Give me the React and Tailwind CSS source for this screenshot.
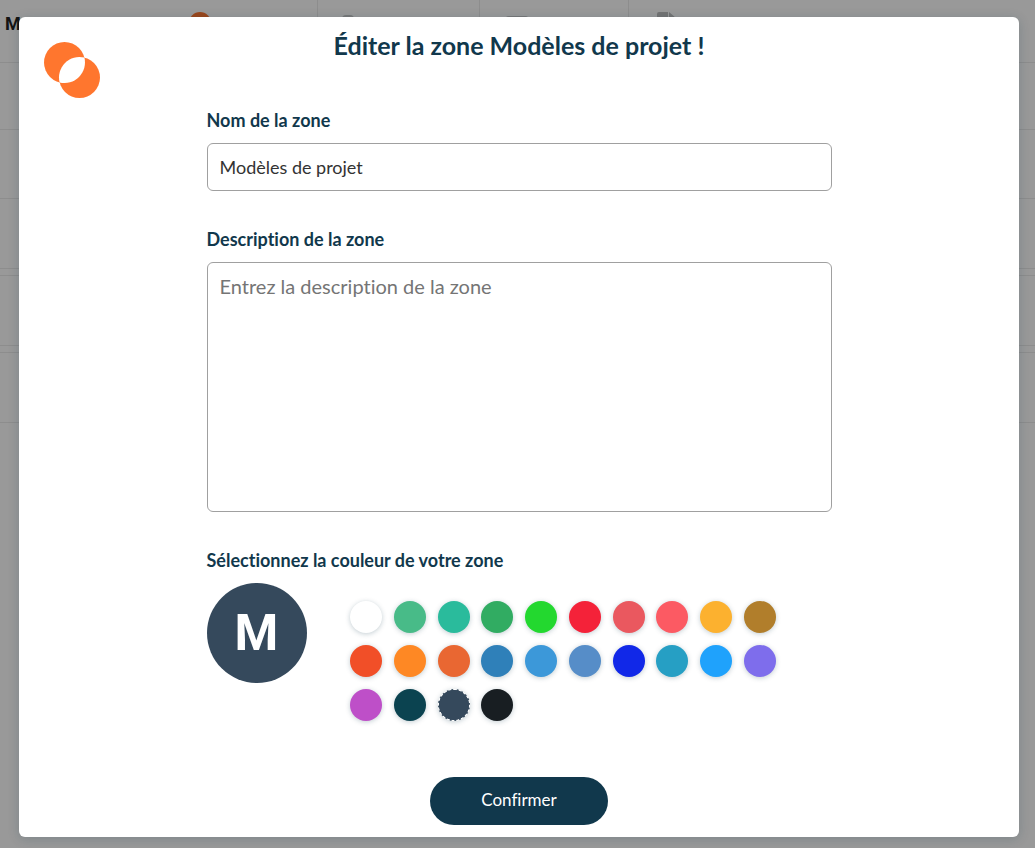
import { useState } from 'react';

const COLORS = [
  { name: 'Blanc', value: '#ffffff' },
  { name: 'Vert menthe', value: '#48bb88' },
  { name: 'Turquoise', value: '#2abb9c' },
  { name: 'Vert', value: '#31ac62' },
  { name: 'Vert vif', value: '#23d82f' },
  { name: 'Rouge', value: '#f42239' },
  { name: 'Rouge doux', value: '#ea585f' },
  { name: 'Corail', value: '#fc5a63' },
  { name: 'Jaune', value: '#fcb12f' },
  { name: 'Bronze', value: '#b17e2b' },
  { name: 'Vermillon', value: '#f14f28' },
  { name: 'Orange', value: '#fe8824' },
  { name: 'Terre cuite', value: '#e96732' },
  { name: 'Bleu', value: '#2f80b9' },
  { name: 'Bleu ciel', value: '#3c98d9' },
  { name: 'Bleu gris', value: '#568dc8' },
  { name: 'Bleu roi', value: '#1128e8' },
  { name: 'Bleu canard', value: '#269fc4' },
  { name: 'Azur', value: '#1fa2fc' },
  { name: 'Violet', value: '#7e6dec' },
  { name: 'Magenta', value: '#be4fc8' },
  { name: 'Pétrole', value: '#0b4350' },
  { name: 'Ardoise', value: '#35495c' },
  { name: 'Noir', value: '#181e22' },
];

function Logo() {
  return (
    <svg className="absolute left-[25px] top-[25px] size-14" viewBox="0 0 56 56" aria-hidden="true">
      <circle cx="20.5" cy="20.5" r="20.5" fill="#ff762e" />
      <circle cx="35.5" cy="35.5" r="20.5" fill="#ff762e" />
      <path d="M40.4 15.6A20.5 20.5 0 0 1 15.6 40.4A20.5 20.5 0 0 1 40.4 15.6Z" fill="#fff" />
    </svg>
  );
}

function Backdrop() {
  return (
    <div className="min-h-screen bg-white" aria-hidden="true">
      <div className="flex h-[63px] border-b border-[#ebebeb]">
        <div className="flex w-[318px] justify-between border-r border-[#ebebeb] pl-[5px] pr-[106px] pt-3">
          <span className="font-['Roboto',sans-serif] text-lg font-bold leading-6 text-[#222]">M</span>
          <span className="size-[22px] rounded-full bg-[#ff762e]" />
        </div>
        <div className="w-[162px] border-r border-[#ebebeb] pl-6 pt-[15px]">
          <div className="h-4 w-3 rounded-sm bg-[#c8c8c8]" />
        </div>
        <div className="w-[149px] border-r border-[#ebebeb] pl-[25px] pt-4">
          <div className="h-4 w-6 rounded-sm bg-[#c8c8c8]" />
        </div>
        <div className="pl-7 pt-3">
          <svg className="h-6 w-[19px]" viewBox="0 0 19 24" fill="#c0c0c0">
            <path d="M2 0h9v7h8v17H0V2a2 2 0 0 1 2-2Z" />
            <path d="M12 0l7 6h-7Z" />
          </svg>
        </div>
      </div>
      <div className="h-[67px] border-b border-[#ebebeb]" />
      <div className="h-[69px] border-b border-[#ebebeb]" />
      <div className="h-[70px] border-b border-[#ebebeb]" />
      <div className="mt-1.5 h-[71px] border-y border-[#ebebeb]" />
      <div className="mt-1.5 h-[71px] border-y border-[#ebebeb]" />
    </div>
  );
}

export default function App() {
  const [name, setName] = useState('Modèles de projet');
  const [description, setDescription] = useState('');
  const [color, setColor] = useState('#35495c');

  return (
    <div className="relative font-['Lato',sans-serif] text-[#11384c] [font-variant-ligatures:none]">
      <Backdrop />

      {/* Modal */}
      <div className="absolute inset-0 flex items-start bg-black/40 pb-[11px] pl-[19px] pr-4 pt-[17px]">
        <div
          role="dialog"
          aria-labelledby="zone-title"
          className="relative w-full rounded-md bg-white px-6 pb-3 pt-3 shadow-[0_2px_12px_rgba(17,56,76,0.2)]"
        >
          <Logo />
          <h1 id="zone-title" className="text-center text-[25px] font-bold leading-8">
            Éditer la zone {name} !
          </h1>

          <form className="mx-auto mt-[47px] max-w-[625px]" onSubmit={(e) => e.preventDefault()}>
            <label htmlFor="zone-name" className="block text-lg font-bold leading-6">
              Nom de la zone
            </label>
            <input
              id="zone-name"
              type="text"
              value={name}
              onChange={(e) => setName(e.target.value)}
              className="mt-[11px] block h-12 w-full rounded-md border border-[#a0a0a0] px-3 text-lg text-[#333] outline-none"
            />

            <label htmlFor="zone-description" className="mt-9 block text-lg font-bold leading-6">
              Description de la zone
            </label>
            <textarea
              id="zone-description"
              value={description}
              onChange={(e) => setDescription(e.target.value)}
              placeholder="Entrez la description de la zone"
              className="mt-[11px] block h-[250px] w-full resize-none rounded-md border border-[#a0a0a0] px-3 py-[9px] text-xl text-[#333] outline-none placeholder:text-[#757575]"
            />

            {/* Couleur */}
            <fieldset className="mt-9">
              <legend className="text-lg font-bold leading-6">Sélectionnez la couleur de votre zone</legend>
              <div className="mt-[11px] flex items-start gap-[38px]">
                <div
                  className="flex size-[100px] shrink-0 items-center justify-center rounded-full font-['Roboto',sans-serif] text-[50px] font-bold text-white"
                  style={{ backgroundColor: color }}
                >
                  {name.charAt(0).toUpperCase()}
                </div>
                <div className="mt-[18px] grid w-[437px] grid-cols-10 justify-items-center gap-y-3">
                  {COLORS.map((c) => (
                    <input
                      key={c.value}
                      type="radio"
                      name="zone-color"
                      aria-label={c.name}
                      value={c.value}
                      checked={color === c.value}
                      onChange={() => setColor(c.value)}
                      className="size-8 cursor-pointer appearance-none rounded-full shadow-[0_1px_5px_rgba(17,56,76,0.25)] checked:border checked:border-dashed checked:border-white"
                      style={{ backgroundColor: c.value }}
                    />
                  ))}
                </div>
              </div>
            </fieldset>

            <button
              type="submit"
              className="mx-auto mt-14 block h-12 w-[178px] cursor-pointer rounded-full bg-[#11384c] pb-0.5 text-[17px] text-white"
            >
              Confirmer
            </button>
          </form>
        </div>
      </div>
    </div>
  );
}
